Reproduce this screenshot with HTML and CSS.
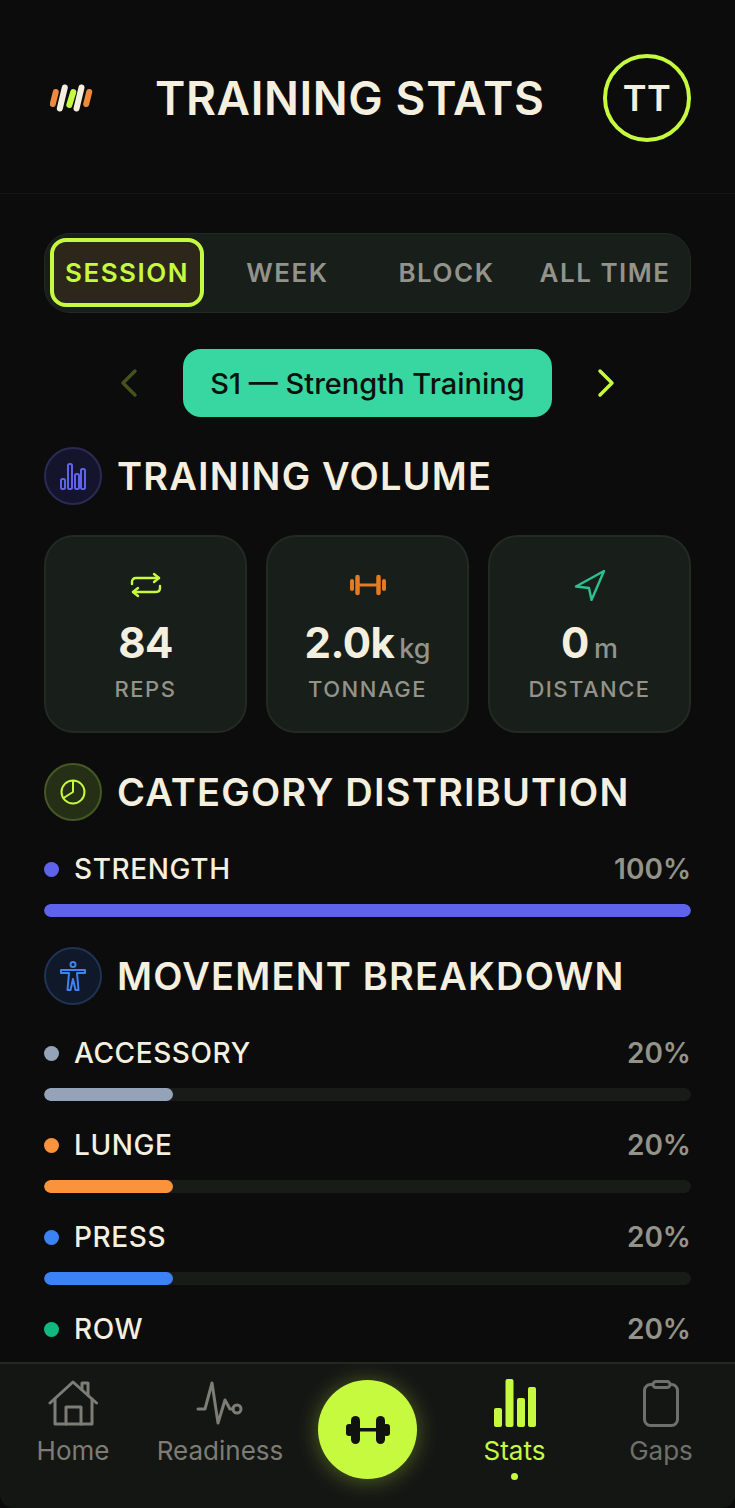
FILE: index.html
```html
<!DOCTYPE html>
<html lang="en">
<head>
<meta charset="utf-8">
<title>Training Stats</title>
<link rel="stylesheet" href="styles.css">
</head>
<body>
<div class="app">
  <header class="top">
    <svg class="logo" width="44" height="30" viewBox="0 0 44 30">
      <g fill="none" stroke-linecap="round" stroke-width="6">
        <path d="M5.800 8 2.800 20" stroke="#ed8a3c"/>
        <path d="M14.800 3.500 9.800 24.500" stroke="#f5efdf"/>
        <path d="M23.300 8 19.300 21" stroke="#c6fa3e"/>
        <path d="M31.500 3.500 26.500 24.500" stroke="#f5efdf"/>
        <path d="M39.200 8 36.200 20" stroke="#ed8a3c"/>
      </g>
    </svg>
    <h1 class="title">TRAINING STATS</h1>
    <div class="avatar">TT</div>
  </header>
  <main class="content">
    <nav class="tabs">
      <span class="tab tab-on">SESSION</span>
      <span class="tab">WEEK</span>
      <span class="tab">BLOCK</span>
      <span class="tab">ALL TIME</span>
    </nav>
    <div class="pager">
      <svg class="chev" width="20" height="30" viewBox="0 0 20 30"><path d="M16 3 4 15l12 12" stroke="#c6fa3e" stroke-opacity=".3"/></svg>
      <div class="pill">S1 — Strength Training</div>
      <svg class="chev" width="20" height="30" viewBox="0 0 20 30"><path d="m4 3 12 12L4 27" stroke="#c6fa3e"/></svg>
    </div>

    <section class="head">
      <span class="badge badge-indigo">
        <svg width="26" height="28" viewBox="0 0 26 28" fill="none" stroke="#5f63ec" stroke-width="2"><rect x="1" y="17" width="4" height="10" rx="1.500"/><rect x="8" y="2" width="4" height="25" rx="1.500"/><rect x="15" y="12" width="4" height="15" rx="1.500"/><rect x="21" y="7" width="4" height="20" rx="1.500"/></svg>
      </span>
      <h2>TRAINING VOLUME</h2>
    </section>

    <div class="cards">
      <article class="card">
        <svg class="cicon" width="32" height="24" viewBox="0 0 32 24" fill="none" stroke="#c6fa3e" stroke-width="2.400" stroke-linecap="round" stroke-linejoin="round"><path d="M2 11V9q0-4 4-4h23"/><path d="m24 1 5 4-5 4"/><path d="M30 13v2q0 4-4 4H3"/><path d="m8 15-5 4 5 4"/></svg>
        <div class="val">84</div>
        <div class="lab">REPS</div>
      </article>
      <article class="card">
        <svg class="cicon" width="36" height="24" viewBox="0 0 36 24" fill="none" stroke="#e57a20" stroke-linecap="round"><path d="M9 12h18" stroke-width="3"/><path d="M7.500 4v16M28.500 4v16" stroke-width="4.500"/><path d="M2 8v8M34 8v8" stroke-width="4"/></svg>
        <div class="val">2.0k<small>kg</small></div>
        <div class="lab">TONNAGE</div>
      </article>
      <article class="card">
        <svg class="cicon" width="32" height="32" viewBox="0 0 32 32" fill="none" stroke="#2bc193" stroke-width="2.400" stroke-linejoin="round"><path d="M30 2 2 17.500l13 1.500 2.500 12z"/></svg>
        <div class="val">0<small>m</small></div>
        <div class="lab">DISTANCE</div>
      </article>
    </div>

    <section class="head">
      <span class="badge badge-lime">
        <svg width="26" height="26" viewBox="0 0 26 26" fill="none" stroke="#c6fa3e" stroke-width="2" stroke-linejoin="round"><circle cx="13" cy="13" r="11.500"/><path d="M13 1.500V13L3.500 19"/></svg>
      </span>
      <h2>CATEGORY DISTRIBUTION</h2>
    </section>

    <div class="row">
      <div class="row-top"><span class="dot dot-indigo"></span><span class="name">STRENGTH</span><span class="pct">100%</span></div>
      <div class="track"><div class="fill fill-indigo" style="width:100%"></div></div>
    </div>

    <section class="head">
      <span class="badge badge-blue">
        <svg width="26" height="30" viewBox="0 0 26 30" fill="none" stroke="#3f83f0" stroke-width="2" stroke-linejoin="round"><circle cx="13" cy="3.500" r="2.500"/><path d="M1 9h24v3h-8l1.500 17h-3L13 18l-2.500 11h-3L9 12H1z"/></svg>
      </span>
      <h2>MOVEMENT BREAKDOWN</h2>
    </section>

    <div class="row">
      <div class="row-top"><span class="dot dot-slate"></span><span class="name">ACCESSORY</span><span class="pct">20%</span></div>
      <div class="track"><div class="fill fill-slate" style="width:20%"></div></div>
    </div>
    <div class="row">
      <div class="row-top"><span class="dot dot-orange"></span><span class="name">LUNGE</span><span class="pct">20%</span></div>
      <div class="track"><div class="fill fill-orange" style="width:20%"></div></div>
    </div>
    <div class="row">
      <div class="row-top"><span class="dot dot-blue"></span><span class="name">PRESS</span><span class="pct">20%</span></div>
      <div class="track"><div class="fill fill-blue" style="width:20%"></div></div>
    </div>
    <div class="row">
      <div class="row-top"><span class="dot dot-green"></span><span class="name">ROW</span><span class="pct">20%</span></div>
      <div class="track"><div class="fill fill-green" style="width:20%"></div></div>
    </div>
  </main>
  <footer class="bar">
    <a class="item item-home">
      <svg width="50" height="46" viewBox="0 0 50 46" fill="none" stroke="#7d7d76" stroke-width="3" stroke-linejoin="round" stroke-linecap="round"><path d="M2 23 25 2l23.500 21"/><path d="M7 19v25h37V19"/><path d="M18 44V27h15v17"/><path d="M34 9V3h6v12"/></svg>
      <span>Home</span>
    </a>
    <a class="item item-ready">
      <svg width="48" height="46" viewBox="0 0 48 46" fill="none" stroke="#7d7d76" stroke-width="3" stroke-linejoin="round" stroke-linecap="round"><path d="M2 29h7l7-26 6 40 7-23 5 9h3"/><circle cx="41" cy="29" r="4"/></svg>
      <span>Readiness</span>
    </a>
    <button class="fab" type="button" aria-label="Workout">
      <svg width="44" height="28" viewBox="0 0 44 28" fill="#101210"><rect x="0" y="8" width="7" height="12" rx="3"/><rect x="5" y="0" width="9" height="28" rx="4.500"/><rect x="13" y="12" width="18" height="3.500"/><rect x="30" y="0" width="9" height="28" rx="4.500"/><rect x="37" y="8" width="7" height="12" rx="3"/></svg>
    </button>
    <a class="item item-on">
      <svg width="42" height="48" viewBox="0 0 42 48" fill="#c6fa3e"><rect x="0" y="29" width="8" height="19" rx="2"/><rect x="11.500" y="0" width="8" height="48" rx="2"/><rect x="23" y="19" width="8" height="29" rx="2"/><rect x="34" y="8" width="8" height="40" rx="2"/></svg>
      <span>Stats</span>
      <i class="pip"></i>
    </a>
    <a class="item item-gaps">
      <svg width="36" height="48" viewBox="0 0 36 48" fill="none" stroke="#6f706b" stroke-width="3"><rect x="1.500" y="4.500" width="33" height="41" rx="6"/><rect x="10" y="1.500" width="17" height="6" rx="3" fill="#141614"/></svg>
      <span>Gaps</span>
    </a>
  </footer>
</div>
</body>
</html>
```
FILE: styles.css
```css
* { box-sizing: border-box; margin: 0; padding: 0; }
html, body { height: 100%; background: #0b0c0b; }
body { font-family: Inter, "Liberation Sans", sans-serif; color: #f5efdf; overflow: hidden; }
.app { width: 735px; height: 1508px; display: flex; flex-direction: column; overflow: hidden; background: #0b0c0b; }

.top { height: 194px; flex: none; display: flex; align-items: flex-start; padding: 54px 44px 0 50px; border-bottom: 1px solid #151715; }
.logo { margin-top: 30px; flex: none; }
.title { font-size: 46px; line-height: 88px; font-weight: 600; letter-spacing: .6px; margin-left: 61px; flex: 1; white-space: nowrap; }
.avatar { width: 88px; height: 88px; flex: none; border-radius: 50%; border: 4px solid #c6fa3e; display: flex; align-items: center; justify-content: center; font-size: 36px; font-weight: 600; letter-spacing: .5px; }

.content { flex: 1; min-height: 0; overflow: hidden; padding: 39px 44px 0; }
.tabs { height: 80px; display: flex; align-items: center; padding: 0 5px 2px; background: #181e1a; border: 1px solid #222823; border-radius: 26px; }
.tab { width: 159px; flex: none; text-align: center; font-size: 26px; font-weight: 600; letter-spacing: 1.500px; color: #93938a; }
.tab-on { width: 154px; height: 69px; line-height: 61px; margin-right: 4px; color: #c6fa3e; background: #2c261b; border: 4px solid #c6fa3e; border-radius: 16px; }
.tab:last-child { width: 150px; margin-left: 4px; }

.pager { height: 68px; margin-top: 36px; display: flex; align-items: center; justify-content: center; gap: 44px; }
.chev { flex: none; fill: none; stroke-width: 3.500; stroke-linecap: round; stroke-linejoin: round; }
.pill { width: 369px; height: 68px; flex: none; border-radius: 18px; background: #38d6a0; color: #0b120e; display: flex; align-items: center; justify-content: center; font-size: 29px; font-weight: 500; }

.head { height: 58px; margin-top: 30px; display: flex; align-items: center; gap: 15px; }
.head h2 { font-size: 38px; line-height: 58px; font-weight: 600; letter-spacing: 1.200px; white-space: nowrap; }
.badge { width: 58px; height: 58px; flex: none; border-radius: 50%; display: flex; align-items: center; justify-content: center; border: 2px solid; }
.badge-indigo { background: #14142c; border-color: #2a2b55; }
.badge-lime { background: #252f16; border-color: #465726; }
.badge-blue { background: #10192a; border-color: #1f3353; }

.cards { margin-top: 30px; display: grid; grid-template-columns: repeat(3, 1fr); gap: 19px; }
.card { height: 198px; background: #181e1a; border: 2px solid #232923; border-radius: 30px; display: flex; flex-direction: column; align-items: center; }
.cicon { height: 32px; margin-top: 32px; flex: none; }
.val { height: 50px; margin-top: 17px; font-size: 42px; line-height: 50px; font-weight: 700; letter-spacing: -.5px; white-space: nowrap; }
.val small { font-size: 27px; font-weight: 500; letter-spacing: 0; color: #93938a; margin-left: 5px; }
.lab { margin-top: 6px; font-size: 22px; line-height: 30px; letter-spacing: 1.500px; font-weight: 500; color: #93938a; }

.row { margin-top: 24px; height: 68px; }
.head + .row { margin-top: 28px; }
.row-top { height: 40px; display: flex; align-items: center; }
.dot { width: 15px; height: 15px; border-radius: 50%; flex: none; margin-right: 15px; }
.name { flex: 1; font-size: 28px; font-weight: 500; letter-spacing: .6px; }
.pct { font-size: 28px; font-weight: 600; color: #93938a; }
.track { margin-top: 15px; height: 13px; border-radius: 7px; background: #191b18; overflow: hidden; }
.fill { height: 100%; border-radius: 7px; }
.dot-indigo, .fill-indigo { background: #5f63ec; }
.dot-slate, .fill-slate { background: #94a3b8; }
.dot-orange, .fill-orange { background: #fb923c; }
.dot-blue, .fill-blue { background: #3b82f6; }
.dot-green, .fill-green { background: #10b981; }

.bar { height: 146px; flex: none; position: relative; background: #141614; border-top: 2px solid #242823; border-radius: 0 0 14px 14px; }
.item { position: absolute; top: 0; display: flex; flex-direction: column; align-items: center; font-size: 26px; color: #7d7d76; text-decoration: none; }
.item span { position: absolute; top: 69px; white-space: nowrap; line-height: 36px; }
.item-home { left: 23px; width: 100px; padding-top: 16px; }
.item-ready { left: 170px; width: 100px; padding-top: 16px; }
.item-on { left: 464px; width: 101px; padding-top: 15px; color: #c6fa3e; }
.item-gaps { left: 611px; width: 100px; padding-top: 16px; color: #6f706b; }
.pip { position: absolute; top: 109px; width: 7px; height: 7px; border-radius: 50%; background: #c6fa3e; }
.fab { position: absolute; left: 318px; top: 16px; width: 99px; height: 99px; border: 0; border-radius: 50%; background: #c6fa3e; display: flex; align-items: center; justify-content: center; box-shadow: 0 2px 22px rgba(198, 250, 62, .35); }
```
